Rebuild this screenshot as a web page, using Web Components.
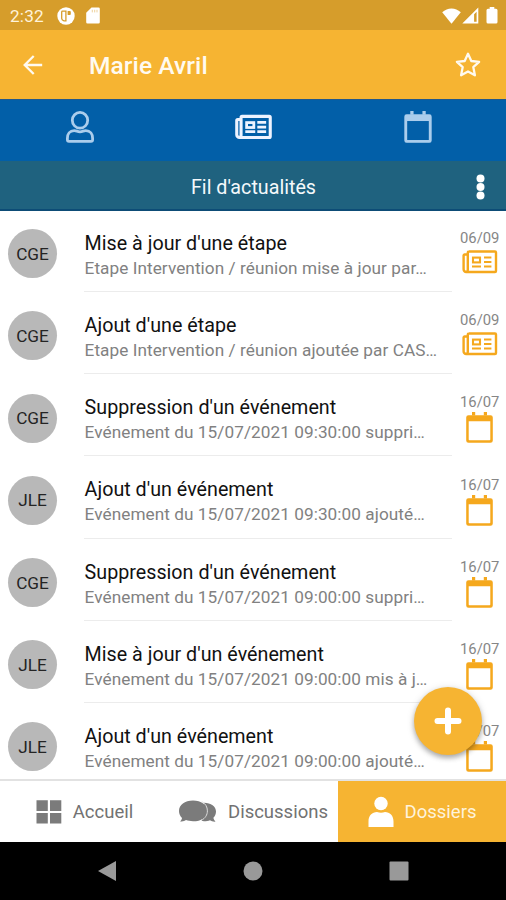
<!DOCTYPE html>
<html lang="fr">
<head>
<meta charset="utf-8">
<title>Marie Avril</title>
<style>
    html, body { margin: 0; height: 100%; }
    body { font-family: Roboto, "Liberation Sans", sans-serif; overflow: hidden; }
</style>
</head>
<body>

<dossier-app>
    <status-bar slot="top" time="2:32"></status-bar>
    <app-bar slot="top">Marie Avril</app-bar>
    <tab-strip slot="top">
        <ui-icon name="user" style="color: #abcdec"></ui-icon>
        <ui-icon name="news-tab" style="color: #eef3ff"></ui-icon>
        <ui-icon name="calendar-tab" style="color: #abcdec"></ui-icon>
    </tab-strip>
    <section-title slot="top">Fil d'actualités</section-title>

    <feed-item initials="CGE" date="06/09" icon="news">Mise à jour d'une étape<span slot="detail">Etape Intervention / réunion mise à jour par…</span></feed-item>
    <feed-item initials="CGE" date="06/09" icon="news">Ajout d'une étape<span slot="detail">Etape Intervention / réunion ajoutée par CAS…</span></feed-item>
    <feed-item initials="CGE" date="16/07" icon="calendar">Suppression d'un événement<span slot="detail">Evénement du 15/07/2021 09:30:00 suppri…</span></feed-item>
    <feed-item initials="JLE" date="16/07" icon="calendar">Ajout d'un événement<span slot="detail">Evénement du 15/07/2021 09:30:00 ajouté…</span></feed-item>
    <feed-item initials="CGE" date="16/07" icon="calendar">Suppression d'un événement<span slot="detail">Evénement du 15/07/2021 09:00:00 suppri…</span></feed-item>
    <feed-item initials="JLE" date="16/07" icon="calendar">Mise à jour d'un événement<span slot="detail">Evénement du 15/07/2021 09:00:00 mis à j…</span></feed-item>
    <feed-item initials="JLE" date="16/07" icon="calendar">Ajout d'un événement<span slot="detail">Evénement du 15/07/2021 09:00:00 ajouté…</span></feed-item>

    <bottom-nav slot="bottom">
        <nav-item icon="grid">Accueil</nav-item>
        <nav-item icon="chat">Discussions</nav-item>
        <nav-item icon="person" active>Dossiers</nav-item>
    </bottom-nav>
    <system-nav slot="bottom"></system-nav>
</dossier-app>

<script>
(function() {
    const CALENDAR = `
        <path d="M6 0h3.2v3.5H6zM17.8 0H21v3.5h-3.2z" fill="currentColor"/>
        <path fill-rule="evenodd" fill="currentColor" d="M2.5 3.2h22a2.3 2.3 0 0 1 2.3 2.3v23a2.3 2.3 0 0 1-2.3 2.3h-22a2.3 2.3 0 0 1-2.300-2.300v-23a2.300 2.300 0 0 1 2.300-2.300zM2.700 9.300v18.300q0 .7.7.7h20.200q.7 0 .7-.7V9.300z"/>`;

    // name: [width, height, viewBox, shapes]
    const ICONS = {
        'disc': [18, 18, '0 0 18 18', `<circle cx="9" cy="9" r="8.700" fill="currentColor"/>
            <path d="M5.500 4.200h3.400v9.600H7q-2.300-.6-2.300-2.300V5q0-.8.8-.8z" fill="none" stroke="#d69d2b" stroke-width="1.300"/>
            <path d="M10.600 3.900h2.200q1 0 1 1v2.200q0 1-1 1h-2.200z" fill="#d69d2b"/>`],
        'sd': [14, 17, '0 0 14 17', `<path d="M5.500.5H12.500a1.300 1.300 0 0 1 1.300 1.300v13.400a1.300 1.300 0 0 1-1.300 1.300h-11A1.300 1.300 0 0 1 .2 15.200V5.800z" fill="currentColor"/>
            <path d="M6.300 2.800v2.600M8.700 2.800v2.600M11 2.800v2.600" stroke="#e6bd70" stroke-width=".7"/>`],
        'wifi': [19, 16, '0 0 19 16', `<path d="M9.500 15.700.2 4.200C5.500-.9 13.500-.9 18.800 4.200z" fill="currentColor"/>`],
        'signal': [17, 17, '0 0 17 17', `<path fill-rule="evenodd" d="M16.300.5v16H.3zM14.600 4.700v10h-2.500V7.200z" fill="currentColor"/>`],
        'battery': [12, 17, '0 0 12 17', `<path d="M3.700 0h4.600v1.800h1.700q1.500 0 1.500 1.500v11.700q0 1.500-1.500 1.500H2q-1.500 0-1.500-1.500V3.300q0-1.500 1.500-1.500h1.700z" fill="currentColor"/>`],
        'back': [20, 20, '0 0 20 20', `<path d="M19.200 10H2M10.700 1 1.700 10l9 9" fill="none" stroke="currentColor" stroke-width="2.300"/>`],
        'star': [28, 27, '0 0 28 27', `<path d="M14 2.800 17.300 10l7.800.8-5.800 5.300 1.600 8.200L14 20.400l-6.900 3.900 1.600-8.200-5.800-5.300 7.800-.8z" fill="none" stroke="currentColor" stroke-width="2.300" stroke-linejoin="round"/>`],
        'user': [30, 32, '0 0 30 32', `<ellipse cx="15" cy="9.300" rx="7.700" ry="7.900" fill="none" stroke="currentColor" stroke-width="2.800"/>
            <path d="M9.200 19.600c2.500 0 3 1.200 5.800 1.200s3.300-1.200 5.800-1.200c4.500 0 6.800 3.400 6.800 7.600v1.500q0 1.600-1.600 1.600H4q-1.600 0-1.600-1.600v-1.500c0-4.200 2.300-7.600 6.800-7.600z" fill="none" stroke="currentColor" stroke-width="2.800"/>`],
        'news': [36, 24, '0 0 36 24', `
            <path d="M6.600 1.500H33a1 1 0 0 1 1 1V21a1 1 0 0 1-1 1H4.200A2.700 2.700 0 0 1 1.600 19.200V5.500a1 1 0 0 1 1-1h3.200V2.500a1 1 0 0 1 1-1zM5.800 4.500V19.500c0 1.500-.5 2.400-1.700 2.500" fill="none" stroke="currentColor" stroke-width="2.400"/>
            <rect x="11" y="7.600" width="7" height="4.800" fill="none" stroke="currentColor" stroke-width="2.100"/>
            <path d="M22 7.500h7.400M22 12h7.400M22 16.500h7.400M10 16.500h9" stroke="currentColor" stroke-width="2.100"/>`],
        'news-tab': [37, 26, '-.3 -.2 36 24', `
            <path d="M6.600 1.500H33a1 1 0 0 1 1 1V21a1 1 0 0 1-1 1H4.200A2.700 2.700 0 0 1 1.400 19.200V5.500a1 1 0 0 1 1-1h3.200V2.500a1 1 0 0 1 1-1zM5.600 4.500V19.500c0 1.500-.5 2.400-1.700 2.500" fill="none" stroke="currentColor" stroke-width="3"/>
            <rect x="11" y="7.500" width="7" height="4.800" fill="none" stroke="currentColor" stroke-width="2.700"/>
            <path d="M21.400 7.400h8.600M21.400 11.900h8.600M21.400 16.400h8.600M9.700 16.400h9.700" stroke="currentColor" stroke-width="2.700"/>`],
        'calendar': [27, 31, '0 0 27 31', CALENDAR],
        'calendar-tab': [28, 32, '-.1 0 27.200 31', CALENDAR + `<rect x="2" y="8.700" width="23" height="20.500" fill="none" stroke="currentColor" stroke-width="2"/>`],
        'more': [9, 26, '0 0 9 26', `<g fill="currentColor"><circle cx="4.500" cy="4.500" r="4"/><circle cx="4.500" cy="13" r="4"/><circle cx="4.500" cy="21.500" r="4"/></g>`],
        'plus': [28, 28, '0 0 28 28', `<path d="M14 3.500v21M3.500 14h21" stroke="currentColor" stroke-width="6" stroke-linecap="round"/>`],
        'grid': [26, 24, '0 0 26 24', `<path d="M.5.3h11.300v10.600H.5zM14 .3h11.300v10.600H14zM.5 13h11.300v10.600H.5zM14 13h11.300v10.600H14z" fill="currentColor"/>`],
        'chat': [38, 23, '0 0 38 23', `<path d="M25 2.800c7 0 12 3.600 12 8.800 0 2.600-1 4.800-2.600 6.200.2 1.500 1 2.700 2.200 3.800-2.200.3-4.300-.5-5.600-1.400-2 .8-5 1.200-8.200.9z" fill="currentColor"/>
            <path d="M14 .5c8.200 0 14.300 4.300 14.300 10.400S22.200 21.300 14 21.300c-2.700 0-5-.5-7-1.200-1.400 1.200-4 1.700-6 1.200 1.300-1 1.800-2.100 2-3.400C1 16 0 13.700 0 10.900 0 4.800 5.800.5 14 .5z" fill="currentColor"/>
            <path d="M22.800 1.600c3.600 1.900 5.600 5.300 5.600 9.300s-2.200 7.400-6 9.400" fill="none" stroke="#ddd" stroke-width="1"/>`],
        'person': [26, 32, '0 0 26 32', `<circle cx="13" cy="7.500" r="6.700" fill="currentColor"/><path d="M.5 31v-5.500C.5 19.400 4.200 16 9 16q4 1.500 8 0c4.800 0 8.500 3.400 8.500 9.500V31z" fill="currentColor"/>`]
    };

    function define(name, html, fill) {
        const template = document.createElement('template');
        template.innerHTML = html;

        customElements.define(name, class extends HTMLElement {
            constructor() {
                super();
                this.attachShadow({mode: 'open'});
            }

            connectedCallback() {
                if (this.shadowRoot.firstChild) return;
                const content = template.content.cloneNode(true);
                if (fill) fill(this, content);
                this.shadowRoot.appendChild(content);
            }
        });
    }

    define('ui-icon', `
<style>
    :host { display: block; flex: none; }
    svg { display: block; overflow: visible; }
</style>
<svg></svg>
`, (host, root) => {
        const [width, height, viewBox, shapes] = ICONS[host.getAttribute('name')];
        const svg = root.querySelector('svg');
        svg.setAttribute('width', width);
        svg.setAttribute('height', height);
        svg.setAttribute('viewBox', viewBox);
        svg.innerHTML = shapes;
    });

    define('status-bar', `
<style>
    :host { display: flex; align-items: center; box-sizing: border-box; height: 30px; padding: 1px 8px 0 10px; background: #d69d2b; color: #fff; font-size: 17.200px; }
    .time { width: 47px; letter-spacing: .2px; color: #fff3da; }
    .sd { margin-left: 11px; }
    .wifi { margin-left: auto; margin-right: 1px; }
    .battery { margin-left: 7px; }
</style>
<span class="time"></span>
<ui-icon name="disc"></ui-icon>
<ui-icon class="sd" name="sd"></ui-icon>
<ui-icon class="wifi" name="wifi"></ui-icon>
<ui-icon name="signal"></ui-icon>
<ui-icon class="battery" name="battery"></ui-icon>
`, (host, root) => {
        root.querySelector('.time').textContent = host.getAttribute('time');
    });

    define('app-bar', `
<style>
    :host { display: flex; align-items: center; box-sizing: border-box; height: 69px; padding: 0 24px 0 23px; background: #f6b432; color: #fffaf0; }
    h1 { flex: 1; margin: 2px 0 0 46px; font-size: 24.600px; font-weight: 500; line-height: 30px; letter-spacing: .05px; }
</style>
<ui-icon name="back"></ui-icon>
<h1><slot></slot></h1>
<ui-icon name="star"></ui-icon>
`);

    define('tab-strip', `
<style>
    :host { display: grid; grid-template-columns: repeat(3, 1fr); justify-items: center; align-items: center; box-sizing: border-box; height: 62px; padding: 0 4px 6px; background: #025fa8; box-shadow: inset 0 1px #21588a; }
    ::slotted(:first-child) { margin-right: 15px; }
    ::slotted(:last-child) { margin-right: 3px; }
</style>
<slot></slot>
`);

    define('section-title', `
<style>
    :host { display: grid; grid-template-columns: 52px 1fr 52px; align-items: center; box-sizing: border-box; height: 50px; background: #1f627f; border-bottom: 2px solid #0d4c76; color: #f4f9fb; }
    h2 { margin: 4px 0 0 1px; text-align: center; font-size: 19.700px; font-weight: 400; }
    ui-icon { justify-self: center; margin: 3px 0 0 1px; color: #fff; }
</style>
<span></span>
<h2><slot></slot></h2>
<ui-icon name="more"></ui-icon>
`);

    define('feed-item', `
<style>
    :host { display: grid; grid-template-columns: 49px 395px 1fr; box-sizing: border-box; height: 82.200px; padding: 0 7px 0 8px; flex: none; }
    .avatar { width: 49px; height: 49px; margin-top: 18.300px; border-radius: 50%; background: #b8b8b8; color: #242424; display: flex; align-items: center; justify-content: center; font-size: 17.200px; }
    .text { margin-left: 27px; height: 80px; border-bottom: 1px solid #ececec; white-space: nowrap; }
    .title { margin: 20.800px 0 0 .6px; line-height: 24px; font-size: 19.700px; letter-spacing: .01px; color: #111; }
    .detail { margin-left: .6px; line-height: 24px; font-size: 17.200px; letter-spacing: .06px; color: #818181; }
    .meta { display: flex; flex-direction: column; align-items: center; padding-left: 8px; }
    .date { margin-top: 17px; height: 22px; line-height: 20px; font-size: 14.800px; color: #868686; }
    .meta ui-icon { color: #f5a81d; }
    .meta ui-icon[name=calendar] { margin-top: -2px; }
</style>
<div class="avatar"></div>
<div class="text">
    <div class="title"><slot></slot></div>
    <div class="detail"><slot name="detail"></slot></div>
</div>
<div class="meta">
    <span class="date"></span>
    <ui-icon></ui-icon>
</div>
`, (host, root) => {
        root.querySelector('.avatar').textContent = host.getAttribute('initials');
        root.querySelector('.date').textContent = host.getAttribute('date');
        root.querySelector('ui-icon').setAttribute('name', host.getAttribute('icon'));
    });

    define('add-button', `
<style>
    :host { display: flex; align-items: center; justify-content: center; width: 68px; height: 68px; border-radius: 50%; background: #f6b432; color: #fff; box-shadow: 0 3px 5px rgba(0, 0, 0, .28), 0 1px 8px rgba(0, 0, 0, .12); }
</style>
<ui-icon name="plus"></ui-icon>
`);

    define('nav-item', `
<style>
    :host { display: flex; align-items: center; justify-content: center; gap: 11px; color: #727272; font-size: 18.500px; }
    :host([active]) { background: #f6b432; color: #fff3dc; }
    ui-icon { color: #7b7b7b; }
    :host([active]) ui-icon { color: #fff; }
    span { padding-top: 1px; }
</style>
<ui-icon></ui-icon>
<span><slot></slot></span>
`, (host, root) => {
        root.querySelector('ui-icon').setAttribute('name', host.getAttribute('icon'));
    });

    define('bottom-nav', `
<style>
    :host { display: grid; grid-template-columns: 1fr 1fr 168px; box-sizing: border-box; height: 63px; border-top: 2px solid #e2e2e2; background: #fff; }
</style>
<slot></slot>
`);

    define('system-nav', `
<style>
    :host { display: grid; grid-template-columns: repeat(3, 146px); justify-content: center; justify-items: center; align-items: center; height: 58px; background: #000; }
    svg { display: block; fill: #999; }
</style>
<svg width="20" height="22"><path d="M1 11 19 1v20z"/></svg>
<svg width="20" height="20"><circle cx="10" cy="10" r="9.500"/></svg>
<svg width="20" height="20"><rect x=".5" y=".5" width="19" height="19" rx="1"/></svg>
`);

    define('dossier-app', `
<style>
    :host { display: flex; flex-direction: column; width: 506px; height: 900px; background: #fff; overflow: hidden; }
    main { position: relative; flex: 1; min-height: 0; }
    .feed { display: flex; flex-direction: column; height: 100%; overflow: hidden; }
    add-button { position: absolute; right: 24px; bottom: 24px; }
</style>
<slot name="top"></slot>
<main>
    <div class="feed"><slot></slot></div>
    <add-button></add-button>
</main>
<slot name="bottom"></slot>
`);
})();
</script>
</body>
</html>
